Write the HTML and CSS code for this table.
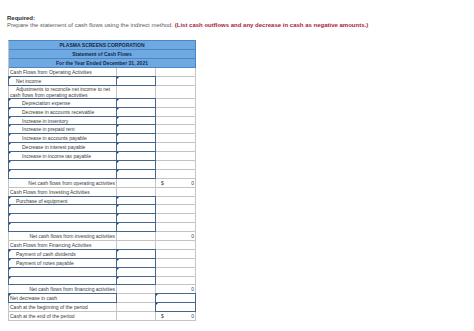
FILE: index.html
```html
<!DOCTYPE html>
<html lang="en">
<head>
<meta charset="utf-8">
<title>Statement of Cash Flows</title>
<link rel="stylesheet" href="styles.css">
</head>
<body>
<div class="page">
  <p class="req">Required:</p>
  <p class="instr">Prepare the statement of cash flows using the indirect method. <span class="note">(List cash outflows and any decrease in cash as negative amounts.)</span></p>
  <table class="cf">
    <colgroup><col class="c1"><col class="c2"><col class="c3"></colgroup>
    <thead>
      <tr><th colspan="3">PLASMA SCREENS CORPORATION</th></tr>
      <tr><th colspan="3">Statement of Cash Flows</th></tr>
      <tr><th colspan="3">For the Year Ended December 31, 2021</th></tr>
    </thead>
    <tbody>
      <tr><td class="lbl">Cash Flows from Operating Activities</td><td></td><td></td></tr>
      <tr><td class="lbl in i1">Net income</td><td class="in"></td><td></td></tr>
      <tr class="dbl"><td class="lbl wrap">Adjustments to reconcile net income to net<br>cash flows from operating activities</td><td></td><td></td></tr>
      <tr><td class="lbl in i2">Depreciation expense</td><td class="in"></td><td></td></tr>
      <tr><td class="lbl in i2">Decrease in accounts receivable</td><td class="in"></td><td></td></tr>
      <tr><td class="lbl in i2">Increase in inventory</td><td class="in"></td><td></td></tr>
      <tr><td class="lbl in i2">Increase in prepaid rent</td><td class="in"></td><td></td></tr>
      <tr><td class="lbl in i2">Increase in accounts payable</td><td class="in"></td><td></td></tr>
      <tr><td class="lbl in i2">Decrease in interest payable</td><td class="in"></td><td></td></tr>
      <tr><td class="lbl in i2">Increase in income tax payable</td><td class="in"></td><td></td></tr>
      <tr><td class="lbl in"></td><td class="in"></td><td></td></tr>
      <tr><td class="lbl in"></td><td class="in"></td><td></td></tr>
      <tr><td class="lbl tot">Net cash flows from operating activities</td><td></td><td><div class="amt"><span>$</span><span>0</span></div></td></tr>
      <tr><td class="lbl">Cash Flows from Investing Activities</td><td></td><td></td></tr>
      <tr><td class="lbl in i1">Purchase of equipment</td><td class="in"></td><td></td></tr>
      <tr><td class="lbl in"></td><td class="in"></td><td></td></tr>
      <tr><td class="lbl in"></td><td class="in"></td><td></td></tr>
      <tr><td class="lbl in"></td><td class="in"></td><td></td></tr>
      <tr><td class="lbl tot">Net cash flows from investing activities</td><td></td><td><div class="amt end"><span>0</span></div></td></tr>
      <tr><td class="lbl">Cash Flows from Financing Activities</td><td></td><td></td></tr>
      <tr><td class="lbl in i1">Payment of cash dividends</td><td class="in"></td><td></td></tr>
      <tr><td class="lbl in i1">Payment of notes payable</td><td class="in"></td><td></td></tr>
      <tr><td class="lbl in"></td><td class="in"></td><td></td></tr>
      <tr><td class="lbl in"></td><td class="in"></td><td></td></tr>
      <tr><td class="lbl tot">Net cash flows from financing activities</td><td></td><td><div class="amt end"><span>0</span></div></td></tr>
      <tr><td class="lbl in">Net decrease in cash</td><td></td><td class="in"></td></tr>
      <tr><td class="lbl">Cash at the beginning of the period</td><td></td><td class="in"></td></tr>
      <tr><td class="lbl">Cash at the end of the period</td><td></td><td><div class="amt"><span>$</span><span>0</span></div></td></tr>
    </tbody>
  </table>
</div>
</body>
</html>
```
FILE: styles.css
```css
html, body {
  margin: 0;
  background: #ffffff;
}
body {
  font-family: "Liberation Sans", Arial, sans-serif;
}
.page {
  padding: 15px 0 0 7px;
}
.req {
  margin: 0;
  font-size: 6px;
  line-height: 7px;
  font-weight: bold;
  color: #2b2b2b;
}
.instr {
  margin: 0;
  font-size: 6px;
  line-height: 7px;
  color: #5a5a5a;
  white-space: nowrap;
}
.note {
  color: #a51d36;
  font-weight: bold;
}
.cf {
  margin: 11px 0 0 1px;
  border-collapse: separate;
  border-spacing: 0;
  table-layout: fixed;
  width: 187px;
  border-top: 1px solid #4d86c6;
  border-left: 1px solid #c4c4c4;
  font-size: 5px;
  line-height: 6px;
  color: #3a3a3a;
}
.c1 { width: 108px; }
.c2 { width: 39px; }
.c3 { width: 40px; }
.cf th {
  height: 8px;
  padding: 0;
  background: #6fa9e2;
  color: #16284a;
  font-weight: bold;
  text-align: center;
  border-bottom: 1px solid #4d86c6;
  border-right: 1px solid #4d86c6;
}
.cf thead tr:first-child th {
  border-left: 0;
}
.cf td {
  height: 7.9px;
  padding: 0 1px;
  border-right: 1px solid #c4c4c4;
  border-bottom: 1px solid #c4c4c4;
  white-space: nowrap;
  overflow: visible;
  position: relative;
  vertical-align: middle;
}
.cf tr.dbl td {
  height: 12px;
}
.cf td.wrap {
  white-space: normal;
  text-indent: 6px;
}
.cf td.i1 { padding-left: 7px; }
.cf td.i2 { padding-left: 13px; }
.cf td.tot { text-align: right; }
.cf td.in::after {
  content: "";
  position: absolute;
  top: -1px;
  left: -1px;
  right: -1px;
  bottom: -1px;
  border: 1px solid #46668c;
  pointer-events: none;
}
.cf td.in::before {
  content: "";
  position: absolute;
  top: 0;
  left: 0;
  width: 0;
  height: 0;
  border-top: 2px solid #1d3c6c;
  border-right: 2px solid transparent;
  z-index: 1;
}
.amt {
  display: flex;
  justify-content: space-between;
  padding: 0 0 0 4px;
}
.amt.end {
  justify-content: flex-end;
}
```
